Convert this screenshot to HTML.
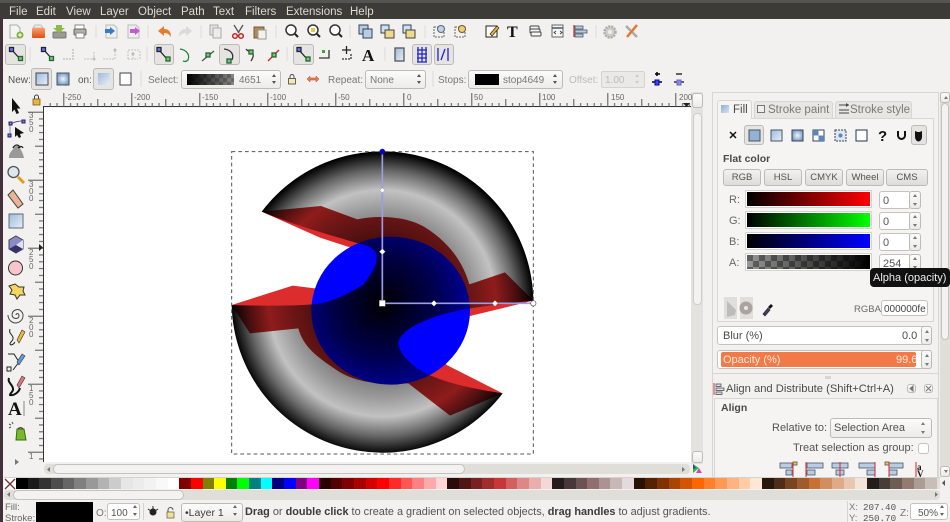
<!DOCTYPE html>
<html><head><meta charset="utf-8"><title>Inkscape</title>
<style>
html,body{margin:0;padding:0;background:#f2f1f0}
#r{position:relative;width:950px;height:522px;overflow:hidden;background:#f2f1f0;font-family:"Liberation Sans",sans-serif;color:#4a4a46;filter:blur(.35px)}
#r div{position:absolute;box-sizing:border-box}
.t{white-space:nowrap;font-size:11px;line-height:13px;color:#55534e;transform:translateY(.8px)}
.m{color:#dfdbd2;font-size:11.5px;top:5px}
.c{background:linear-gradient(#fbfbfa,#ecebe9);border:1px solid #bdbbb6;border-radius:3px}
.i{background:#fff;border:1px solid #c4c2bd;border-radius:3px}
.b{background:linear-gradient(#f2f1f0,#dedcd8);border:1px solid #bdbbb6;border-radius:3px;text-align:center;font-size:9.5px;line-height:15px;color:#55534e}
.bar{left:746px;width:125px;height:16px;border:1px solid #fff;outline:1px solid #d5d3cf}
#pal{left:16px;top:478px;width:924px;height:11px;overflow:hidden;display:flex}
#pal span{flex:0 0 11.66px;height:11px}
</style></head><body><div id="r">
<div style="left:0;top:0;width:950px;height:19px;background:#3c3b37;border-top:3px solid #56544f"></div>
<div style="left:0;top:19px;width:3px;height:503px;background:#43303a"></div>
<div class="t m" style="left:9px">File</div><div class="t m" style="left:36px">Edit</div><div class="t m" style="left:66px">View</div><div class="t m" style="left:100px">Layer</div><div class="t m" style="left:138px">Object</div><div class="t m" style="left:181px">Path</div><div class="t m" style="left:213px">Text</div><div class="t m" style="left:245px">Filters</div><div class="t m" style="left:286px">Extensions</div><div class="t m" style="left:350px">Help</div>

<!-- pressed buttons toolbar 2 -->
<div class="c" style="left:5px;top:44px;width:21px;height:21px;background:#e6e4e1"></div>
<div class="c" style="left:154px;top:44px;width:20px;height:21px;background:#e6e4e1"></div>
<div class="c" style="left:219px;top:44px;width:21px;height:21px;background:#e6e4e1"></div>
<div class="c" style="left:293px;top:44px;width:21px;height:21px;background:#e6e4e1"></div>
<div class="c" style="left:412px;top:44px;width:20px;height:21px;background:#e6e4e1"></div>
<div class="c" style="left:434px;top:44px;width:20px;height:21px;background:#e6e4e1"></div>

<!-- toolbar 3 -->
<div class="t" style="left:8px;top:73px;font-size:10px">New:</div>
<div class="c" style="left:31px;top:68px;width:21px;height:22px;background:#e6e4e1"></div>
<div class="t" style="left:78px;top:73px;font-size:10px">on:</div>
<div class="c" style="left:93px;top:68px;width:21px;height:22px;background:#e6e4e1"></div>
<div class="t" style="left:148px;top:73px;font-size:10px;color:#777">Select:</div>
<div class="c" style="left:181px;top:70px;width:100px;height:19px"></div>
<div style="left:187px;top:74px;width:47px;height:11px;background:linear-gradient(90deg,#000,rgba(0,0,0,.1)),repeating-conic-gradient(#999 0 25%,#777 0 50%) 0 0/8px 8px"></div>
<div class="t" style="left:239px;top:73px;font-size:10px;color:#777">4651</div>
<div class="t" style="left:328px;top:73px;font-size:10px;color:#777">Repeat:</div>
<div class="c" style="left:365px;top:70px;width:61px;height:19px"></div>
<div class="t" style="left:370px;top:73px;font-size:10px;color:#777">None</div>
<div class="t" style="left:438px;top:73px;font-size:10px;color:#777">Stops:</div>
<div class="c" style="left:468px;top:70px;width:95px;height:19px"></div>
<div style="left:475px;top:74px;width:24px;height:11px;background:#000"></div>
<div class="t" style="left:503px;top:73px;font-size:10px;color:#777">stop4649</div>
<div class="t" style="left:569px;top:73px;font-size:10px;color:#bbb">Offset:</div>
<div style="left:601px;top:71px;width:44px;height:17px;background:#ebe9e7;border:1px solid #d5d3cf;border-radius:2px"></div>
<div class="t" style="left:605px;top:73px;font-size:10px;color:#bbb">1.00</div>

<!-- canvas -->
<div style="left:44px;top:108px;width:647px;height:354px;background:#fff"></div>
<div style="left:43px;top:106px;width:648px;height:1px;background:#333"></div>
<div style="left:43px;top:106px;width:1px;height:356px;background:#333"></div>
<!-- v scroll -->
<div style="left:691px;top:92px;width:12px;height:372px;background:#e4e2de"></div>
<div class="c" style="left:692px;top:93px;width:11px;height:15px"></div>
<div style="left:693px;top:113px;width:9px;height:192px;background:#f3f2f1;border:1px solid #cfcdc8;border-radius:4px"></div>
<div class="c" style="left:692px;top:451px;width:11px;height:12px"></div>
<!-- h scroll -->
<div style="left:44px;top:464px;width:646px;height:10px;background:#e0ded9;border-radius:4px"></div>
<div style="left:53px;top:464px;width:412px;height:10px;background:#f3f2f1;border:1px solid #c4c2bd;border-radius:5px"></div>
<!-- palette -->
<div style="left:4px;top:478px;width:12px;height:11px;background:#fff"></div>
<div id="pal"><span style="background:#000"></span><span style="background:#1a1a1a"></span><span style="background:#333"></span><span style="background:#4d4d4d"></span><span style="background:#666"></span><span style="background:#808080"></span><span style="background:#999"></span><span style="background:#b3b3b3"></span><span style="background:#ccc"></span><span style="background:#e6e6e6"></span><span style="background:#ececec"></span><span style="background:#f2f2f2"></span><span style="background:#f9f9f9"></span><span style="background:#fff"></span><span style="background:#800000"></span><span style="background:#f00"></span><span style="background:#808000"></span><span style="background:#ff0"></span><span style="background:#008000"></span><span style="background:#0f0"></span><span style="background:#008080"></span><span style="background:#0ff"></span><span style="background:#000080"></span><span style="background:#00f"></span><span style="background:#800080"></span><span style="background:#f0f"></span><span style="background:#2b0000"></span><span style="background:#500"></span><span style="background:#800000"></span><span style="background:#a00"></span><span style="background:#d40000"></span><span style="background:#f00"></span><span style="background:#ff2a2a"></span><span style="background:#f55"></span><span style="background:#ff8080"></span><span style="background:#faa"></span><span style="background:#ffd5d5"></span><span style="background:#280b0b"></span><span style="background:#501616"></span><span style="background:#782121"></span><span style="background:#a02c2c"></span><span style="background:#c83737"></span><span style="background:#d35f5f"></span><span style="background:#de8787"></span><span style="background:#e9afaf"></span><span style="background:#f4d7d7"></span><span style="background:#241c1c"></span><span style="background:#483737"></span><span style="background:#6c5353"></span><span style="background:#916f6f"></span><span style="background:#ac9393"></span><span style="background:#c8b7b7"></span><span style="background:#e3dbdb"></span><span style="background:#2b1100"></span><span style="background:#520"></span><span style="background:#803300"></span><span style="background:#a40"></span><span style="background:#d45500"></span><span style="background:#f60"></span><span style="background:#ff7f2a"></span><span style="background:#f95"></span><span style="background:#ffb380"></span><span style="background:#fca"></span><span style="background:#ffe6d5"></span><span style="background:#28170b"></span><span style="background:#502d16"></span><span style="background:#784421"></span><span style="background:#a05a2c"></span><span style="background:#c87137"></span><span style="background:#d38d5f"></span><span style="background:#deaa87"></span><span style="background:#e9c6af"></span><span style="background:#f4e3d7"></span><span style="background:#241f1c"></span><span style="background:#483e37"></span><span style="background:#6c5d53"></span><span style="background:#917c6f"></span><span style="background:#ac9d93"></span><span style="background:#c8beb7"></span><span style="background:#e3dedb"></span></div>
<div style="left:4px;top:490px;width:936px;height:10px;background:#e0ded9;border-radius:4px"></div>
<div style="left:13px;top:490px;width:171px;height:10px;background:#f3f2f1;border:1px solid #c4c2bd;border-radius:5px"></div>
<div style="left:4px;top:477px;width:936px;height:1px;background:#d5d3cf"></div>

<!-- status -->
<div class="t" style="left:5px;top:501px;font-size:9.5px;line-height:11px;color:#6a6863">Fill:</div>
<div class="t" style="left:5px;top:512px;font-size:9.5px;line-height:11px;color:#6a6863">Stroke:</div>
<div style="left:36px;top:502px;width:57px;height:20px;background:#000"></div>
<div class="t" style="left:96px;top:506px;font-size:10px;color:#777">O:</div>
<div class="i" style="left:107px;top:503px;width:33px;height:17px"></div>
<div class="t" style="left:111px;top:506px;font-size:10px;color:#555">100</div>
<div style="left:143px;top:503px;width:1px;height:17px;background:#d5d3cf"></div>
<div class="c" style="left:181px;top:503px;width:62px;height:19px"></div>
<div class="t" style="left:185px;top:506px;font-size:10.5px;color:#3c3b37">•Layer 1</div>
<div class="t" style="left:245px;top:505px;font-size:10.9px;color:#55534e"><b style="color:#3c3b37">Drag</b> or <b style="color:#3c3b37">double click</b> to create a gradient on selected objects, <b style="color:#3c3b37">drag handles</b> to adjust gradients.</div>
<div style="left:847px;top:501px;width:1px;height:21px;background:#d5d3cf"></div>
<div class="t" style="left:849px;top:501px;font-size:9.5px;line-height:11px;color:#777">X:</div>
<div class="t" style="left:849px;top:512px;font-size:9.5px;line-height:11px;color:#777">Y:</div>
<div class="t" style="left:863px;top:501px;font:9.2px/11px 'Liberation Mono',monospace;color:#555">207.40</div>
<div class="t" style="left:863px;top:512px;font:9.2px/11px 'Liberation Mono',monospace;color:#555">250.70</div>
<div class="t" style="left:900px;top:506px;font-size:10px;color:#777">Z:</div>
<div class="i" style="left:910px;top:503px;width:38px;height:17px"></div>
<div class="t" style="left:918px;top:506px;font-size:10px;color:#555">50%</div>

<!-- dock -->
<div style="left:712px;top:92px;width:227px;height:385px;border:1px solid #d8d6d1;border-bottom:0;background:#f2f1f0"></div>
<div style="left:940px;top:92px;width:10px;height:385px;background:#e0ded9"></div>
<div style="left:941px;top:103px;width:8px;height:237px;background:#f3f2f1;border:1px solid #c4c2bd;border-radius:4px"></div>
<div class="c" style="left:940px;top:92px;width:10px;height:11px"></div>
<div class="c" style="left:940px;top:466px;width:10px;height:11px"></div>
<div style="left:717px;top:118px;width:217px;height:204px;background:#f5f4f3;border:1px solid #d8d6d1;border-top:1px solid #d8d6d1"></div>
<div style="left:717px;top:100px;width:35px;height:19px;background:#f5f4f3;border:1px solid #d8d6d1;border-bottom:0;border-radius:3px 3px 0 0"></div>
<div style="left:754px;top:101px;width:79px;height:17px;background:#e8e6e3;border:1px solid #d8d6d1;border-bottom:0;border-radius:3px 3px 0 0"></div>
<div style="left:835px;top:101px;width:77px;height:17px;background:#e8e6e3;border:1px solid #d8d6d1;border-bottom:0;border-radius:3px 3px 0 0"></div>
<div style="left:721px;top:105px;width:8px;height:8px;background:linear-gradient(135deg,#8fb0d4,#d5e2f0)"></div>
<div class="t" style="left:733px;top:103px;font-size:11.5px;color:#4a4a46">Fill</div>
<div style="left:757px;top:105px;width:8px;height:8px;border:1px solid #777;background:#eee"></div>
<div class="t" style="left:768px;top:103px;font-size:11.5px;color:#7b7974">Stroke paint</div>
<div class="t" style="left:850px;top:103px;font-size:11.5px;color:#7b7974">Stroke style</div>
<div class="c" style="left:744px;top:125px;width:20px;height:20px;background:#e6e4e1"></div>
<div class="c" style="left:911px;top:125px;width:16px;height:20px;background:#e6e4e1"></div>
<div class="t" style="left:723px;top:152px;font-size:10.5px;font-weight:bold;color:#4a4a46">Flat color</div>
<div class="b" style="left:723px;top:169px;width:38px;height:17px">RGB</div>
<div class="b" style="left:764px;top:169px;width:38px;height:17px">HSL</div>
<div class="b" style="left:805px;top:169px;width:38px;height:17px">CMYK</div>
<div class="b" style="left:846px;top:169px;width:38px;height:17px">Wheel</div>
<div class="b" style="left:886px;top:169px;width:42px;height:17px">CMS</div>
<div class="t" style="left:729px;top:193px;color:#6a6863">R:</div>
<div class="t" style="left:729px;top:214px;color:#6a6863">G:</div>
<div class="t" style="left:729px;top:235px;color:#6a6863">B:</div>
<div class="t" style="left:729px;top:256px;color:#6a6863">A:</div>
<div class="bar" style="top:191px;background:linear-gradient(90deg,#000,#f00)"></div>
<div class="bar" style="top:212px;background:linear-gradient(90deg,#000,#0f0)"></div>
<div class="bar" style="top:233px;background:linear-gradient(90deg,#000,#00f)"></div>
<div class="bar" style="top:254px;background:linear-gradient(90deg,rgba(0,0,0,.05),#000),repeating-conic-gradient(#a0a0a0 0 25%,#666 0 50%) 0 0/12px 12px"></div>
<div class="i" style="left:879px;top:191px;width:32px;height:18px"></div><div class="t" style="left:883px;top:194px;color:#555">0</div>
<div class="i" style="left:879px;top:212px;width:32px;height:18px"></div><div class="t" style="left:883px;top:215px;color:#555">0</div>
<div class="i" style="left:879px;top:233px;width:32px;height:18px"></div><div class="t" style="left:883px;top:236px;color:#555">0</div>
<div class="i" style="left:879px;top:254px;width:32px;height:18px"></div><div class="t" style="left:883px;top:257px;color:#555">254</div>
<div class="c" style="left:909px;top:191px;width:12px;height:18px"></div>
<div class="c" style="left:909px;top:212px;width:12px;height:18px"></div>
<div class="c" style="left:909px;top:233px;width:12px;height:18px"></div>
<div class="c" style="left:909px;top:254px;width:12px;height:18px"></div>
<div style="left:724px;top:297px;width:13px;height:22px;background:#e0dedb"></div>
<div style="left:740px;top:297px;width:13px;height:22px;background:#e0dedb"></div>
<div class="t" style="left:854px;top:302px;font-size:9.5px;color:#6a6863">RGBA:</div>
<div class="i" style="left:881px;top:300px;width:47px;height:16px"></div>
<div class="t" style="left:884px;top:302px;font-size:10px;color:#444">000000fe</div>
<!-- blur -->
<div class="i" style="left:717px;top:326px;width:215px;height:19px"></div>
<div class="c" style="left:921px;top:326px;width:11px;height:19px"></div>
<div class="t" style="left:723px;top:329px;font-size:11px;color:#4a4a46">Blur (%)</div>
<div class="t" style="left:902px;top:329px;font-size:11px;color:#4a4a46">0.0</div>
<div class="i" style="left:717px;top:350px;width:215px;height:19px"></div>
<div class="c" style="left:921px;top:350px;width:11px;height:19px"></div>
<div style="left:721px;top:352px;width:195px;height:15px;background:#f27a49;border-radius:2px"></div>
<div class="t" style="left:723px;top:353px;font-size:11px;color:#ffe9dd">Opacity (%)</div>
<div class="t" style="left:896px;top:353px;font-size:11px;color:#ffe9dd">99.6</div>
<div style="left:713px;top:373px;width:225px;height:1px;background:#d8d6d1"></div>
<div class="t" style="left:726px;top:382px;font-size:11.2px;color:#4a4a46">Align and Distribute (Shift+Ctrl+A)</div>
<div class="c" style="left:907px;top:384px;width:9px;height:9px"></div>
<div class="c" style="left:924px;top:384px;width:9px;height:9px"></div>
<div style="left:714px;top:398px;width:224px;height:79px;background:#f5f4f3;border:1px solid #d8d6d1;border-bottom:0"></div>
<div class="t" style="left:721px;top:401px;font-size:10.5px;font-weight:bold;color:#4a4a46">Align</div>
<div class="t" style="left:772px;top:421px;font-size:11px;color:#55534e">Relative to:</div>
<div class="c" style="left:830px;top:418px;width:102px;height:20px"></div>
<div class="t" style="left:834px;top:421px;font-size:11px;color:#55534e">Selection Area</div>
<div class="t" style="left:793px;top:441px;font-size:11px;color:#55534e">Treat selection as group:</div>
<div class="i" style="left:918px;top:443px;width:11px;height:11px"></div>

<svg width="950" height="522" viewBox="0 0 950 522" style="position:absolute;left:0;top:0">
<defs>
<radialGradient id="g" gradientUnits="userSpaceOnUse" cx="487" cy="490" r="453">
<stop offset="0" stop-color="#000"/><stop offset=".35" stop-opacity=".7"/><stop offset=".5" stop-opacity=".52"/><stop offset=".62" stop-opacity=".4"/><stop offset=".75" stop-opacity=".24"/><stop offset=".88" stop-opacity=".6"/><stop offset="1" stop-opacity="1"/>
</radialGradient>
<clipPath id="cp"><path d="M125 215L303 198 412 238C470 226 560 226 620 265 690 310 730 370 748 433L855 397 940 482 750 528 620 560 680 675 848 760 690 827 565 730C470 735 400 725 350 690 290 650 250 620 235 565L90 580 35 495 218 437 285 445 400 400 390 322 300 293Z"/></clipPath>
<pattern id="rt" patternUnits="userSpaceOnUse" x="63.3" y="92" width="68" height="15"><path d="M.5 1V15M7.3 11V15M14.1 11V15M20.9 11V15M27.7 11V15M34.5 7V15M41.3 11V15M48.1 11V15M54.9 11V15M61.7 11V15" stroke="#555" fill="none"/></pattern>
<pattern id="rl" patternUnits="userSpaceOnUse" x="27" y="111.7" width="16" height="68"><path d="M1 .5H16M12 7.3H16M12 14.1H16M12 20.9H16M12 27.7H16M8 34.5H16M12 41.3H16M12 48.1H16M12 54.9H16M12 61.7H16" stroke="#555" fill="none"/></pattern>
<linearGradient id="lb" x1="0" y1="0" x2="1" y2="1"><stop offset="0" stop-color="#9dbbdc"/><stop offset="1" stop-color="#e8eff7"/></linearGradient>
<linearGradient id="or" x1="0" y1="0" x2="0" y2="1"><stop offset="0" stop-color="#f9a06a"/><stop offset="1" stop-color="#de4d17"/></linearGradient>
<radialGradient id="rb"><stop offset="0" stop-color="#f2f6fb"/><stop offset="1" stop-color="#7f9fc6"/></radialGradient>
</defs>

<!-- rulers -->
<rect x="44" y="92" width="646" height="15" fill="url(#rt)"/>
<rect x="27" y="107" width="16" height="355" fill="url(#rl)"/>
<g font-family="Liberation Sans" font-size="8" fill="#666">
<text x="65" y="100">-250</text><text x="134" y="100">-200</text><text x="202" y="100">-150</text><text x="270" y="100">-100</text><text x="338" y="100">-50</text><text x="407" y="100">0</text><text x="474" y="100">50</text><text x="542" y="100">100</text><text x="611" y="100">150</text><text x="679" y="100">200</text>
<text x="29" y="118">3</text><text x="29" y="125">5</text><text x="29" y="132">0</text>
<text x="29" y="187">3</text><text x="29" y="194">0</text><text x="29" y="201">0</text>
<text x="29" y="255">2</text><text x="29" y="262">5</text><text x="29" y="269">0</text>
<text x="29" y="323">2</text><text x="29" y="330">0</text><text x="29" y="337">0</text>
<text x="29" y="391">1</text><text x="29" y="398">5</text><text x="29" y="405">0</text>
<text x="29" y="459">1</text>
</g>
<path d="M683 103h7l-3.500 4zM39 244v7l4-3.500z" fill="#222"/>
<!-- lock -->
<g><rect x="33" y="99" width="7" height="6" fill="#e8b73a" stroke="#6a4a10" stroke-width=".7"/><path d="M34.500 99v-2a2 2 0 0 1 4 0v2" fill="none" stroke="#444" stroke-width="1"/></g>

<!-- drawing -->
<g transform="translate(220 140) scale(.33333)">
<path d="M125 215L303 198 412 238C470 226 560 226 620 265 690 310 730 370 748 433L855 397 940 482 750 528 620 560 680 675 848 760 690 827 565 730C470 735 400 725 350 690 290 650 250 620 235 565L90 580 35 495 218 437 285 445 400 400 390 322 300 293Z" fill="#dd2c2c"/>
<path clip-path="url(#cp)" d="M125 215A453 453 0 0 1 940 482C860 490 700 505 620 540 570 560 535 585 535 612 540 650 590 690 640 710 700 735 780 750 848 760A453 453 0 0 1 35 495C120 498 220 498 275 493 320 490 350 480 430 435 460 395 472 370 470 345 465 325 440 315 415 310 330 285 220 255 125 215Z" fill="rgba(0,0,0,.15)"/>
<ellipse cx="512" cy="512" rx="238" ry="222" fill="#00f"/>
<path d="M125 215A453 453 0 0 1 940 482C860 490 700 505 620 540 570 560 535 585 535 612 540 650 590 690 640 710 700 735 780 750 848 760A453 453 0 0 1 35 495C120 498 220 498 275 493 320 490 350 480 430 435 460 395 472 370 470 345 465 325 440 315 415 310 330 285 220 255 125 215Z" fill="url(#g)"/>
<rect x="35" y="35" width="905" height="907" fill="none" stroke="#555" stroke-width="3" stroke-dasharray="11 9"/>
<path d="M487 35V490H940" fill="none" stroke="#9c9cea" stroke-width="5"/>
<circle cx="487" cy="35" r="8" fill="#0000e0" stroke="#223" stroke-width="1.5"/>
<path d="M487 143l8 8-8 8-8-8zM487 326l9 9-9 9-9-9zM642 481l9 9-9 9-9-9zM825 481l9 9-9 9-9-9z" fill="#fff" stroke="#666" stroke-width="1"/>
<rect x="478" y="481" width="18" height="18" fill="#fff" stroke="#777" stroke-width="1.5"/>
<circle cx="940" cy="490" r="8" fill="#fff" stroke="#555" stroke-width="2"/>
</g>

<!-- toolbar 1 -->
<g stroke-width="1">
<path d="M10 25h7l3 3v10h-10z" fill="#f4f4f0" stroke="#aaa"/><circle cx="20" cy="35" r="3.500" fill="#7fb239"/><path d="M18 35h4M20 33v4" stroke="#fff"/>
<path d="M33 28l2-3h6l2 3z" fill="#eee" stroke="#bbb"/><rect x="32" y="28" width="13" height="10" rx="1" fill="url(#or)"/>
<rect x="53" y="32" width="13" height="6" rx="1" fill="#9a9a94" stroke="#777"/><path d="M56 25h6v3h3l-6 5-6-5h3z" fill="#8cbb45"/>
<rect x="75" y="25" width="9" height="5" fill="#fff" stroke="#888"/><rect x="74" y="29" width="12" height="6" rx="1" fill="#b0b0aa" stroke="#666"/><rect x="76" y="33" width="8" height="5" fill="#fff" stroke="#888"/>
<path d="M106 25h8l3 3v10h-11z" fill="#eeeeea" stroke="#bbb"/><path d="M105 29h5v-2l5 4-5 4v-2h-5z" fill="#3a7bc8"/>
<path d="M128 25h8l3 3v10h-11z" fill="#eeeeea" stroke="#bbb"/><path d="M130 29h5v-2l5 4-5 4v-2h-5z" fill="#c65ad0"/>
<path d="M158 31l6-5v3c5 0 7 3 7 8-2-3-4-4-7-4v3z" fill="#e77b2c"/>
<path d="M192 31l-6-5v3c-5 0-7 3-7 8 2-3 4-4 7-4v3z" fill="#dcdad6"/>
<rect x="210" y="25" width="8" height="10" fill="#e6e4e1" stroke="#aaa"/><rect x="213" y="28" width="8" height="10" fill="#ececea" stroke="#aaa"/>
<path d="M234 25l5 8M243 25l-5 8" stroke="#555" stroke-width="1.300"/><circle cx="235" cy="36" r="2.300" fill="none" stroke="#c22" stroke-width="1.500"/><circle cx="241" cy="36" r="2.300" fill="none" stroke="#c22" stroke-width="1.500"/>
<rect x="254" y="27" width="10" height="11" fill="#b08a5a" stroke="#7a5a30"/><rect x="258" y="30" width="8" height="9" fill="#f2f1ec" stroke="#999"/>
<g fill="#fff" stroke="#333" stroke-width="1.500"><circle cx="291" cy="30" r="5"/><circle cx="313" cy="30" r="5"/><circle cx="335" cy="30" r="5"/></g>
<path d="M295 34l3 3M317 34l3 3M339 34l3 3" stroke="#222" stroke-width="2"/><rect x="311" y="28" width="4" height="4" fill="#e7c84b"/>
<rect x="359" y="25" width="9" height="9" fill="#b7cde6" stroke="#345"/><rect x="363" y="29" width="9" height="9" fill="#b7cde6" stroke="#345"/>
<rect x="381" y="25" width="8" height="8" fill="#cfe0f0" stroke="#345"/><rect x="385" y="30" width="9" height="8" fill="#f2d98a" stroke="#444"/>
<rect x="403" y="25" width="8" height="8" fill="#cfe0f0" stroke="#345"/><rect x="406" y="30" width="9" height="8" fill="#f2d98a" stroke="#444"/>
<rect x="434" y="27" width="10" height="10" fill="none" stroke="#666" stroke-dasharray="2 1"/><circle cx="441" cy="29" r="3.500" fill="#bcd0e6" stroke="#567"/>
<rect x="455" y="27" width="10" height="10" fill="none" stroke="#666" stroke-dasharray="2 1"/><circle cx="462" cy="29" r="3.500" fill="#efcf6a" stroke="#654"/>
<rect x="486" y="26" width="11" height="11" fill="#fff" stroke="#222"/><path d="M490 34l7-8 2 2-7 8z" fill="#e8b030" stroke="#222" stroke-width=".6"/>
<rect x="530" y="26" width="9" height="4" rx="1" fill="#f5f5f5" stroke="#444"/><rect x="530" y="29" width="10" height="4" rx="1" fill="#f5f5f5" stroke="#444"/><rect x="531" y="32" width="10" height="4" rx="1" fill="#f5f5f5" stroke="#444"/>
<rect x="552" y="25" width="11" height="12" fill="#f6f6f4" stroke="#666"/><path d="M552 28h11" stroke="#456" stroke-width="1.500"/><path d="M556 31l-2 1.500 2 1.500M560 31l2 1.500-2 1.500" fill="none" stroke="#333" stroke-width=".8"/>
<path d="M574 25v12" stroke="#c33" stroke-width="1.300"/><rect x="575" y="26" width="8" height="3" fill="#b6cce4" stroke="#345" stroke-width=".7"/><rect x="575" y="30" width="12" height="3" fill="#b6cce4" stroke="#345" stroke-width=".7"/><rect x="575" y="34" width="8" height="3" fill="#b6cce4" stroke="#345" stroke-width=".7"/>
<circle cx="610" cy="32" r="5.500" fill="#cfcdc8" stroke="#b0aea9" stroke-width="2.500" stroke-dasharray="2 1"/><circle cx="610" cy="32" r="2" fill="#eee"/>
<path d="M626 26l11 11" stroke="#aaa" stroke-width="2.500"/><path d="M637 25l-10 12" stroke="#e8762f" stroke-width="2.500"/>
</g>
<text x="507" y="37" font-family="Liberation Serif" font-weight="bold" font-size="16" fill="#111">T</text>
<!-- separators -->
<path d="M96 25v13M148 25v13M201 25v13M276 25v13M350 25v13M425 25v13M596 25v13M30 47v14M147 47v14M287 47v14M385 47v14M66 73v14M141 71v16M433 71v16" stroke="#dcdad6" fill="none"/>

<!-- toolbar 2 -->
<g fill="none" stroke-width="1.300">
<g><path d="M12 50l8 9" stroke="#222"/><rect x="9.500" y="47.500" width="4" height="4" fill="#6677ee" stroke="#223"/><rect x="18.500" y="56.500" width="4" height="4" fill="#7cc678" stroke="#263"/></g>
<path d="M44 50l8 9" stroke="#222"/><rect x="41.500" y="47.500" width="4" height="4" fill="#6677ee" stroke="#223"/><rect x="49.500" y="56.500" width="4" height="4" fill="#7cc678" stroke="#263"/>
<path d="M63 59h10v-10" stroke="#bbb" stroke-dasharray="2 1"/><path d="M84 59h10v-8M103 59h12M115 59v-10M128 59h10M133 59v-7M128 50h12M128 59v-9M140 59v-9" stroke="#ccc" stroke-dasharray="2 1"/>
<circle cx="94" cy="59" r="1.500" fill="#bbb" stroke="none"/><circle cx="115" cy="50" r="1.500" fill="#bbb" stroke="none"/><circle cx="133" cy="54" r="1.500" fill="#bbb" stroke="none"/>
<path d="M159 50l8 9" stroke="#222"/><rect x="157" y="47.500" width="4" height="4" fill="#6677ee" stroke="#223"/><rect x="166" y="57" width="4" height="4" fill="#7cc678" stroke="#263"/>
<path d="M180 49c7 1 10 6 8 11-1 1-3 2-5 1" stroke="#1e8a3c"/>
<path d="M202 61l12-10" stroke="#555"/><rect x="206" y="53" width="4" height="4" fill="#7cc678" stroke="#263"/>
<path d="M224 49c8 1 10 6 8 11" stroke="#333"/><rect x="227" y="59" width="4" height="4" fill="#7cc678" stroke="#263"/>
<path d="M246 49c3 4 5 1 7 5 1 3-1 5-2 7" stroke="#333"/><rect x="249" y="50" width="4" height="4" fill="#7cc678" stroke="#263"/>
<path d="M268 61l11-11" stroke="#d22"/><rect x="272" y="53" width="4" height="4" fill="#7cc678" stroke="#263"/>
<path d="M299 50l8 9" stroke="#222"/><rect x="297" y="47.500" width="4" height="4" fill="#6677ee" stroke="#223"/><rect x="306" y="57" width="4" height="4" fill="#7cc678" stroke="#263"/>
<path d="M319 58h10v-8" stroke="#333"/><rect x="322" y="50" width="3" height="3" fill="#3a3" stroke="none"/>
<path d="M342 50h9M346.500 46v8" stroke="#222"/><path d="M342 59h9M351 59v-5" stroke="#333" stroke-dasharray="2 1"/>
<rect x="395" y="48" width="9" height="13" fill="url(#lb)" stroke="#555"/>
<path d="M417 50h10M417 54h10M417 58h10M417 62h10M418 47v15M422 47v15M426 47v15" stroke="#22c"/>
<path d="M438 48v13M448 48v13" stroke="#22c"/><path d="M441 60l4-11" stroke="#22c"/>
</g>
<text x="362" y="61" font-family="Liberation Serif" font-weight="bold" font-size="17" fill="#111">A</text>

<!-- toolbar 3 icons -->
<rect x="36" y="73" width="12" height="12" fill="url(#lb)" stroke="#445"/>
<rect x="57" y="73" width="12" height="12" fill="url(#rb)" stroke="#456"/>
<rect x="98" y="73" width="12" height="12" fill="url(#lb)"/>
<rect x="120" y="73" width="11" height="12" fill="#fff" stroke="#444"/>
<rect x="288.500" y="78.500" width="7" height="5.500" fill="#f5e9b0" stroke="#444" stroke-width=".8"/><path d="M290 78.500v-2a2 2 0 0 1 4 0v2" fill="none" stroke="#444" stroke-width=".9"/>
<path d="M307 79l3-3v2h6v-2l3 3-3 3v-2h-6v2z" fill="#e8823a" stroke="#a45" stroke-width=".5"/>
<path d="M652 82h10M657 72v4M655 74h5" stroke="#000" stroke-width="1.500"/><rect x="655" y="80" width="4" height="5" fill="#44f" stroke="#00a"/>
<path d="M674 82h10M676 74h6" stroke="#333" stroke-width="1.500"/><rect x="677" y="80" width="4" height="5" fill="#88e" stroke="#66c"/>
<g fill="#555"><path d="M272 77l2-3 2 3zM272 81l2 3 2-3zM417 77l2-3 2 3zM417 81l2 3 2-3zM553 77l2-3 2 3zM553 81l2 3 2-3z"/><path d="M635 77l2-3 2 3zM635 81l2 3 2-3z" fill="#ccc"/></g>

<!-- left toolbar -->
<path d="M12 98v14l2.500-2.500 2 4.500 2.500-1-2-4.500h3.500z" fill="#111"/>
<path d="M11 124c3-2 7-3 12-3" fill="none" stroke="#558"/><path d="M10 134v-9" stroke="#88a"/><rect x="9" y="122" width="3" height="3" fill="#7a7aff" stroke="#225"/><rect x="22" y="120" width="3" height="3" fill="#7a7aff" stroke="#225"/><rect x="8" y="134" width="3" height="3" fill="#7a7aff" stroke="#225"/><path d="M15 127l9 6-4 1 1 3-2 1-2-3-2 2z" fill="#111"/>
<path d="M9 158c0-5 2-6 4-9 2-3 5-5 7-1 1 2 3 5 4 10z" fill="#999"/><path d="M13 148c2-4 6-4 7 0M18 148c2-2 4-2 5 0" fill="none" stroke="#222" stroke-width="1.300"/>
<circle cx="13.500" cy="172" r="5.500" fill="#dde7f1" stroke="#555" stroke-width="1.300"/><path d="M18 177l6 6" stroke="#e39a1c" stroke-width="3"/>
<path d="M8 195l5-5 10 14-5 4z" fill="#e8b59a" stroke="#443"/>
<rect x="9" y="214" width="14" height="14" fill="url(#lb)" stroke="#667"/>
<path d="M16 236l7 4v9l-7 4-7-4v-9z" fill="#8a8ac8" stroke="#444"/><path d="M16 245l7-5v9l-7 4z" fill="#dfe0f2"/><path d="M9 249l7-4 7 4-7 4z" fill="#33336a"/>
<circle cx="15.500" cy="268" r="7" fill="#f9c5cd" stroke="#333"/>
<path d="M9 286l6-2 4 3 5 0-1 4 2 4-5 0-3 4-2-4-5-1 2-4z" fill="#f2d75c" stroke="#333"/>
<path d="M16 315c0-2 3-2 3 1 0 3-6 4-7-1 0-5 6-7 9-4 4 4 2 11-5 12-5 0-8-4-8-8" fill="none" stroke="#444" stroke-width="1"/>
<path d="M10 329c-2 5 4 6 3 10-1 3-3 3-3 5 1 2 4 0 5-2" fill="none" stroke="#222"/><path d="M17 340l5-10 3 2-6 11z" fill="#f0b62f" stroke="#333" stroke-width=".6"/>
<path d="M8 354h6l5 8-6 8" fill="none" stroke="#222"/><rect x="7" y="367" width="4" height="4" fill="none" stroke="#222"/><path d="M17 362l5-8 3 2-6 9z" fill="#5a9ad6" stroke="#333" stroke-width=".6"/>
<path d="M9 378c-2 5 5 7 4 12-1 3-3 3-3 5 4 1 9-3 10-7" fill="none" stroke="#111" stroke-width="2"/><path d="M17 385l5-9 3 2-6 10z" fill="#d77" stroke="#333" stroke-width=".6"/>
<text x="8" y="415" font-family="Liberation Serif" font-weight="bold" font-size="19" fill="#111">A</text><path d="M24 401v15" stroke="#888"/>
<path d="M17 429h7l2 11h-10z" fill="#7ab82e" stroke="#3b6a10"/><path d="M18 429a3 3 0 0 1 5 0" fill="none" stroke="#333"/><path d="M9 424l2 1M9 428l2-1M12 422l1 2" stroke="#555"/>

<!-- palette none X -->
<path d="M5 479l10 10M15 479l-10 10" stroke="#802a2a" stroke-width="1.300"/>
<path d="M945 480v6l-3-3z" fill="#555"/>
<path d="M15 459l4 3-4 3zM50 467l-3 2.500 3 2.500zM682 467l3 2.500-3 2.500zM10 492l-3 2.500 3 2.500zM935 492l3 2.500-3 2.500z" fill="#777"/>
<path d="M693 464l6 4-6 5z" fill="#3b3"/><path d="M699 468l-3 5h6z" fill="#c4c"/><path d="M693 464l3 4-3 1z" fill="#24c"/>
<g fill="#666"><path d="M133 508l2-3 2 3zM133 513l2 3 2-3zM233 508l2-3 2 3zM233 513l2 3 2-3zM940 508l2-3 2 3zM940 513l2 3 2-3z"/></g>
<circle cx="153" cy="512" r="3.500" fill="#222"/><path d="M148 509l3 2M158 509l-3 2M153 506v3" stroke="#222"/>
<rect x="167" y="512" width="7" height="6" fill="#f3e08a" stroke="#555" stroke-width=".7"/><path d="M168 512v-2a2.500 2.500 0 0 1 5 0" fill="none" stroke="#555"/>
<!-- dock tab icon -->
<path d="M839 105h10M839 110h10M839 113h10" stroke="#444"/><path d="M846 103l3 2-3 2z" fill="#444"/>
<!-- fill buttons -->
<path d="M730 132l6 6M736 132l-6 6" stroke="#111" stroke-width="1.500"/>
<rect x="749" y="130" width="11" height="11" fill="#93b1d3" stroke="#456"/>
<rect x="771" y="130" width="11" height="11" fill="url(#lb)" stroke="#456"/>
<rect x="792" y="130" width="11" height="11" fill="url(#rb)" stroke="#345"/>
<rect x="813" y="130" width="11" height="11" fill="#fff" stroke="#345"/><rect x="813" y="130" width="5.500" height="5.500" fill="#5e86b5"/><rect x="818.500" y="135.500" width="5.500" height="5.500" fill="#5e86b5"/>
<rect x="835" y="130" width="11" height="11" fill="#dde6f2" stroke="#345" stroke-dasharray="2 1"/><circle cx="840.500" cy="135.500" r="2" fill="#5e86b5"/>
<rect x="856" y="130" width="11" height="11" fill="#fff" stroke="#234"/>
<text x="878" y="141" font-family="Liberation Sans" font-weight="bold" font-size="15" fill="#111">?</text>
<path d="M898 131v4.500a3.500 3.500 0 0 0 7 0v-4.500" fill="none" stroke="#111" stroke-width="2"/>
<path d="M915 131l2.500 1h2l2.500-1v6a3.500 4.500 0 0 1-7 0z" fill="#111"/>
<g fill="#777"><path d="M913 197l2-3 2 3zM913 203l2 3 2-3zM913 218l2-3 2 3zM913 224l2 3 2-3zM913 239l2-3 2 3zM913 245l2 3 2-3zM913 260l2-3 2 3zM913 266l2 3 2-3zM925 333l2-3 2 3zM925 339l2 3 2-3zM925 357l2-3 2 3zM925 363l2 3 2-3zM921 425l2-3 2 3zM921 431l2 3 2-3zM944 99l2-3 2 3zM944 470l2 3 2-3z"/></g>
<!-- row icons -->
<path d="M727 301v16l8-2 1-5z" fill="#bdbcb8"/><circle cx="746" cy="308" r="6.500" fill="#aaa39f"/><circle cx="746" cy="308" r="2" fill="#e8e6e3"/>
<path d="M763 314l5-6 2 2-5 6z" fill="#445" stroke="#223" stroke-width=".7"/><path d="M768 307l3-3 2 2-3 3z" fill="#111"/>
<path d="M828 376v3M826 376v3M830 376v3" stroke="#bbb"/>
<path d="M714 383v12" stroke="#c33"/><path d="M716 384h5v2.500h-5zM716 388h8v2.500h-8zM716 392h6v2.500h-6z" fill="#dde" stroke="#444" stroke-width=".7"/>
<!-- align icons -->
<g stroke="#456" stroke-width=".8" fill="#b8cde4">
<rect x="780" y="463" width="12" height="5"/><rect x="786" y="470" width="6" height="5"/><rect x="793" y="462" width="4" height="3" fill="#f2c842"/>
<rect x="807" y="463" width="16" height="5"/><rect x="807" y="470" width="8" height="5"/>
<rect x="832" y="463" width="16" height="5"/><rect x="836" y="470" width="8" height="5"/>
<rect x="859" y="463" width="16" height="5"/><rect x="867" y="470" width="8" height="5"/>
<rect x="889" y="463" width="14" height="5"/><rect x="889" y="470" width="8" height="5"/><rect x="885" y="462" width="4" height="3" fill="#f2c842"/>
</g>
<path d="M793 462v15M806 462v15M840 462v15M875 462v15M889 462v15M916 462v15" stroke="#d22" stroke-width="1"/>
<text x="917" y="470" font-family="Liberation Serif" font-weight="bold" font-size="9" fill="#111">a</text><text x="917" y="477" font-family="Liberation Serif" font-weight="bold" font-size="9" fill="#111">V</text>
<path d="M926 386l5 5M931 386l-5 5M913 386l-3 2.500 3 2.500z" stroke="#777" fill="#777"/>
</svg>

<!-- tooltip on top -->
<div style="left:870px;top:268px;width:80px;height:19px;background:#111;border-radius:4px"></div>
<div class="t" style="left:873px;top:271px;font-size:11px;color:#eee">Alpha (opacity)</div>
</div></body></html>
